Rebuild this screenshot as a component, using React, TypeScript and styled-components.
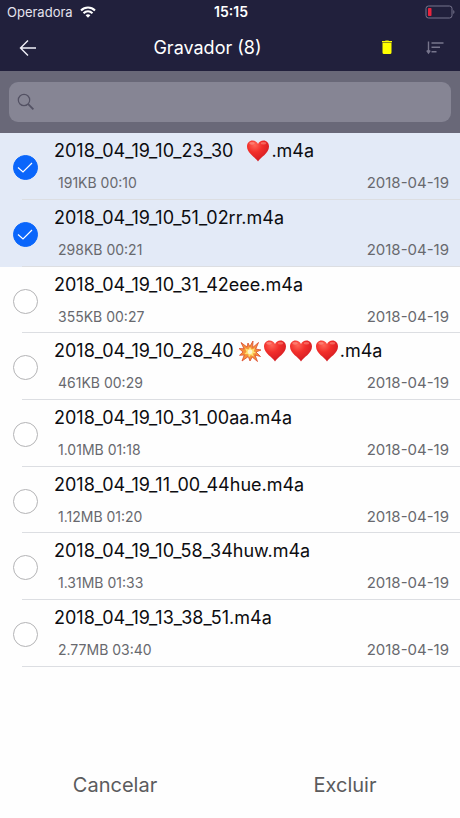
import React, { useState } from "react";
import styled, { createGlobalStyle } from "styled-components";

const GlobalStyle = createGlobalStyle`
  *, *::before, *::after { box-sizing: border-box; }
  html, body, #root { height: 100%; }
  body {
    margin: 0;
    background: #fefefe;
    color: #0c0c10;
    font-family: Inter, "Liberation Sans", sans-serif;
  }
  button, input { font: inherit; }
`;

const Screen = styled.div`
  display: flex;
  flex-direction: column;
  min-height: 100%;
`;

const Header = styled.header`
  background: #21203c;
  color: #fff;
`;

const StatusBar = styled.div`
  display: grid;
  grid-template-columns: 1fr auto 1fr;
  align-items: center;
  height: 24px;
  padding: 0 5px 0 7px;
  font-size: 13px;
  line-height: 16px;
`;

const Carrier = styled.span`
  display: flex;
  align-items: center;
  gap: 7px;
  color: #e4e3ee;
`;

const Clock = styled.time`
  font-size: 14px;
  font-weight: 600;
`;

const BatterySlot = styled.span`
  display: flex;
  justify-content: flex-end;
`;

const NavBar = styled.div`
  display: grid;
  grid-template-columns: auto 1fr auto;
  align-items: center;
  height: 47px;
  padding: 0 11px 0 14px;
`;

const Title = styled.h1`
  margin: 0;
  font-size: 18px;
  line-height: 24px;
  font-weight: 400;
  text-align: center;
`;

const Actions = styled.div`
  display: flex;
  justify-content: flex-end;
  gap: 20px;
`;

const IconButton = styled.button`
  display: flex;
  align-items: center;
  justify-content: center;
  width: 28px;
  height: 28px;
  padding: 0;
  border: 0;
  background: none;
  color: inherit;
  cursor: pointer;
`;

const SearchBar = styled.div`
  padding: 11px 9px;
  background: #696878;
`;

const SearchField = styled.label`
  display: flex;
  align-items: center;
  gap: 8px;
  height: 40px;
  padding: 0 8px;
  border-radius: 9px;
  background: #868594;
`;

const SearchInput = styled.input`
  flex: 1;
  min-width: 0;
  border: 0;
  outline: 0;
  background: transparent;
  color: #fff;
  font-size: 18px;
`;

const List = styled.ul`
  display: grid;
  grid-auto-rows: 67px 67px 66px;
  margin: 0;
  padding: 0;
  list-style: none;
`;

const Row = styled.li<{ $selected: boolean }>`
  background: ${(p) => (p.$selected ? "#e3eaf7" : "#fefefe")};
`;

const RowLabel = styled.label`
  display: flex;
  align-items: center;
  gap: 16px;
  height: 100%;
  padding-left: 13px;
  background: linear-gradient(#dcdee2, #dcdee2) 22px 100% / 100% 1px no-repeat;
  cursor: pointer;
`;

const Tick = styled.input`
  flex: none;
  width: 25px;
  height: 25px;
  margin: 2px 0 0;
  appearance: none;
  border: 1px solid #b4b4b6;
  border-radius: 50%;
  background: #fff;

  &:checked {
    border-color: #0a66fb;
    background: #0a66fb
      url("data:image/svg+xml,%3Csvg xmlns='http://www.w3.org/2000/svg' viewBox='0 0 25 25' fill='none' stroke='white' stroke-width='1.2'%3E%3Cpath d='M5 12.500l5 4.500L19 8'/%3E%3C/svg%3E")
      center / 25px 25px no-repeat;
  }
`;

const Details = styled.span`
  display: flex;
  flex: 1;
  flex-direction: column;
  gap: 11px;
  min-width: 0;
  padding: 0 11px 2px 0;
`;

const FileName = styled.span`
  display: flex;
  align-items: center;
  font-size: 18px;
  line-height: 24px;
  white-space: pre;
`;

const Emojis = styled.span<{ $gap: number }>`
  display: flex;
  align-items: center;
  margin-left: ${(p) => p.$gap}px;
`;

const Meta = styled.span`
  display: flex;
  justify-content: space-between;
  padding-left: 4px;
  color: #68696e;
  font-size: 14px;
  line-height: 18px;
`;

const RecordedOn = styled.time`
  font-size: 15px;
`;

const Footer = styled.footer`
  display: grid;
  grid-template-columns: 1fr 1fr;
  margin-top: auto;
  padding-bottom: 9px;
`;

const FooterButton = styled.button`
  height: 48px;
  padding: 0;
  border: 0;
  background: none;
  color: #5b5b5d;
  font-size: 20px;
  line-height: 28px;
  cursor: pointer;
`;

const WifiIcon = () => (
  <svg width="16" height="12" viewBox="0 0 16 12" fill="none" stroke="#fff" strokeWidth="2.1" aria-hidden="true">
    <path d="M1 4.4C5 .5 11 .5 15 4.4" />
    <path d="M3.5 7.2c2.7-2.5 6.3-2.5 9 0" />
    <path d="M5.6 9.2c1.4-1.2 3.4-1.2 4.8 0L8 11.7z" fill="#fff" stroke="none" />
  </svg>
);

const BatteryIcon = () => (
  <svg width="30" height="14" viewBox="0 0 30 14" aria-label="Bateria fraca" role="img">
    <rect x="1" y="1" width="26" height="12" rx="2.5" fill="none" stroke="#77748d" />
    <rect x="3" y="3" width="3.5" height="8" rx=".7" fill="#e9243d" />
    <path d="M28.3 5v4c1.5-.7 1.5-3.3 0-4z" fill="#77748d" />
  </svg>
);

const BackIcon = () => (
  <svg width="18" height="16" viewBox="0 0 18 16" fill="none" stroke="#f0eff8" strokeWidth="1.4" aria-hidden="true">
    <path d="M9 .500L1.500 8 9 15.500M1.500 8h15.500" />
  </svg>
);

const TrashIcon = () => (
  <svg width="12" height="16" viewBox="0 0 12 16" fill="#ffff00" aria-hidden="true">
    <path d="M1 1h3l.6-.6h2.800L8 1h3v1.200H1zM1.500 2.800h9v9.700q0 1.500-1.500 1.500H3q-1.500 0-1.500-1.500z" />
  </svg>
);

const SortIcon = () => (
  <svg width="18" height="14" viewBox="0 0 18 14" fill="none" stroke="#77758c" strokeWidth="1.4" aria-hidden="true">
    <path d="M2.500 .500v11M.800 9.500l1.700 2.500 1.700-2.500M5.500 2h12M5.500 6.300h8.500M5.500 10.700h5" />
  </svg>
);

const SearchIcon = () => (
  <svg width="18" height="18" viewBox="0 0 18 18" fill="none" stroke="#535163" aria-hidden="true">
    <circle cx="7" cy="7" r="5.7" strokeWidth="1.2" />
    <path d="M11.2 11.2l5.2 5.2" strokeWidth="1.8" />
  </svg>
);

const Heart = () => (
  <svg width="26" height="24" viewBox="0 0 26 24" role="img" aria-label="❤️">
    <defs>
      <radialGradient id="heartFill" cx=".35" cy=".22" r=".85">
        <stop offset="0" stopColor="#ff6557" />
        <stop offset=".4" stopColor="#f22f2b" />
        <stop offset="1" stopColor="#cd1720" />
      </radialGradient>
    </defs>
    <path
      d="M13 22.500C11 18.500 2 14.500 2 7.500 2 4 4.500 1.500 7.500 1.500c2.500 0 4.500 1.200 5.500 3.500 1-2.300 3-3.500 5.500-3.500 3 0 5.500 2.500 5.500 6 0 7-9 11-11 15z"
      fill="url(#heartFill)"
    />
    <ellipse cx="7" cy="4.300" rx="2.800" ry="1.400" fill="#ff9b8d" opacity=".6" />
    <ellipse cx="18.500" cy="4.300" rx="2.800" ry="1.300" fill="#ff9b8d" opacity=".5" />
  </svg>
);

const Burst = () => (
  <svg width="24" height="22" viewBox="1 0 23 22" role="img" aria-label="💥">
    <path
      d="M12.300 6.500L15.500 1l-.3 6.500L21 2.500l-2.800 6.500 5.300 1-5 2 4.500 4.500-5.500-1.500 2.500 6.500-5.300-4.500L12.500 21l-1.700-4.500L4.500 21l2.300-6-4.800.3L5.500 12 1.500 8.500l5 .3L3.500 2.500l6 4.500 1-4z"
      fill="#f5913a"
      stroke="#db4a2c"
      strokeWidth=".8"
    />
    <path d="M12.500 7l1.800 2.500 3.200-1.200-1.300 3 2.500 1.700-3.200.5.8 3-3-1.500-2 2.500-.5-3.300L7 14l2-2.300L7.500 8.300l3.300 1.200z" fill="#ffe070" />
    <circle cx="12.500" cy="11.800" r="2.400" fill="#fff6cf" />
  </svg>
);

type Recording = { name: React.ReactNode; size: string; length: string; checked?: boolean };

const date = "2018-04-19";

const recordings: Recording[] = [
  {
    name: <>2018_04_19_10_23_30<Emojis $gap={12}><Heart /></Emojis>.m4a</>,
    size: "191KB",
    length: "00:10",
    checked: true,
  },
  { name: "2018_04_19_10_51_02rr.m4a", size: "298KB", length: "00:21", checked: true },
  { name: "2018_04_19_10_31_42eee.m4a", size: "355KB", length: "00:27" },
  {
    name: <>2018_04_19_10_28_40<Emojis $gap={4}><Burst /><Heart /><Heart /><Heart /></Emojis>.m4a</>,
    size: "461KB",
    length: "00:29",
  },
  { name: "2018_04_19_10_31_00aa.m4a", size: "1.01MB", length: "01:18" },
  { name: "2018_04_19_11_00_44hue.m4a", size: "1.12MB", length: "01:20" },
  { name: "2018_04_19_10_58_34huw.m4a", size: "1.31MB", length: "01:33" },
  { name: "2018_04_19_13_38_51.m4a", size: "2.77MB", length: "03:40" },
];

export default function App() {
  const [selected, setSelected] = useState(recordings.map((r) => Boolean(r.checked)));
  const toggle = (index: number) =>
    setSelected((prev) => prev.map((value, i) => (i === index ? !value : value)));

  return (
    <>
      <GlobalStyle />
      <Screen>
        <Header>
          <StatusBar>
            <Carrier>Operadora<WifiIcon /></Carrier>
            <Clock>15:15</Clock>
            <BatterySlot><BatteryIcon /></BatterySlot>
          </StatusBar>
          <NavBar>
            <IconButton type="button" aria-label="Voltar"><BackIcon /></IconButton>
            <Title>Gravador (8)</Title>
            <Actions>
              <IconButton type="button" aria-label="Lixeira"><TrashIcon /></IconButton>
              <IconButton type="button" aria-label="Ordenar"><SortIcon /></IconButton>
            </Actions>
          </NavBar>
        </Header>
        <SearchBar>
          <SearchField>
            <SearchIcon />
            <SearchInput type="text" aria-label="Buscar" />
          </SearchField>
        </SearchBar>
        <List>
          {recordings.map((item, i) => (
            <Row key={i} $selected={selected[i]}>
              <RowLabel>
                <Tick type="checkbox" checked={selected[i]} onChange={() => toggle(i)} />
                <Details>
                  <FileName>{item.name}</FileName>
                  <Meta>
                    <span>{item.size} {item.length}</span>
                    <RecordedOn dateTime={date}>{date}</RecordedOn>
                  </Meta>
                </Details>
              </RowLabel>
            </Row>
          ))}
        </List>
        <Footer>
          <FooterButton type="button">Cancelar</FooterButton>
          <FooterButton type="button">Excluir</FooterButton>
        </Footer>
      </Screen>
    </>
  );
}
